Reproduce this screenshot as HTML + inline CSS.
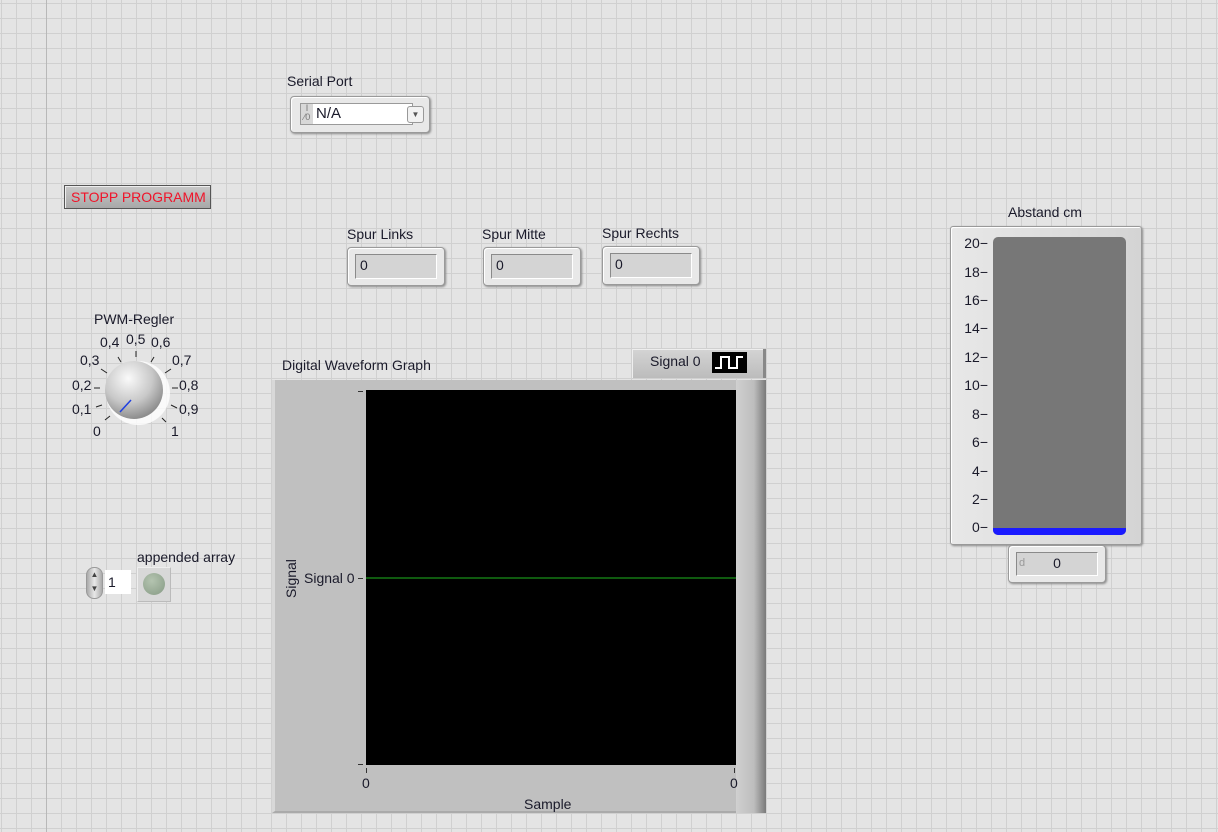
<!DOCTYPE html>
<html><head><meta charset="utf-8"><style>
*{margin:0;padding:0;box-sizing:border-box}
body{width:1218px;height:832px;overflow:hidden;position:relative;font-family:"Liberation Sans",sans-serif;font-size:14px;color:#1a1a2a;
background-color:#e4e4e4;
background-image:linear-gradient(to right,#d0d0d0 1px,transparent 1px),linear-gradient(to bottom,#d0d0d0 1px,transparent 1px);
background-size:15px 15px;background-position:1px 3px}
.a{position:absolute}
.lbl{position:absolute;font-size:14px;white-space:nowrap}
.ind{position:absolute;background:#e8e8e8;border:1px solid #9a9a9a;border-radius:4px;box-shadow:1px 1px 2px #888, inset 1px 1px 0 #fff}
.ind .f{position:absolute;left:7px;top:6px;right:7px;bottom:6px;background:#d4d4d4;border:1px solid #8a8a8a;border-right-color:#fff;border-bottom-color:#fff;padding-left:4px;line-height:21px;font-size:14px}
.sc{position:absolute;font-size:14px;text-align:right;width:42px}
</style></head><body>
<div class="a" style="left:46px;top:0;width:1px;height:832px;background:#b8b8b8"></div>

<div class="lbl" style="left:287px;top:73px">Serial Port</div>
<div class="ind" style="left:290px;top:96px;width:140px;height:37px">
 <div class="a" style="left:9px;top:6px;width:113px;height:22px;background:#fff;border:1px solid #9a9a9a"></div>
 <div class="a" style="left:10px;top:7px;width:12px;height:20px;background:#d8d8d8;font-size:9px;color:#777;line-height:9px;text-align:center">I<br>⁄0</div>
 <div class="a" style="left:25px;top:8px;font-size:15px">N/A</div>
 <div class="a" style="left:116px;top:9px;width:17px;height:17px;background:#f2f2f2;border:1px solid #999;border-radius:3px;font-size:8px;text-align:center;line-height:15px;color:#555">▼</div>
</div>

<div class="a" style="left:64px;top:185px;width:147px;height:24px;background:linear-gradient(#c8c8c8,#a8a8a8);border:1px solid #555;box-shadow:inset 1px 1px 0 #eee;color:#f0142a;font-size:14px;line-height:22px;padding-left:6px">STOPP PROGRAMM</div>

<div class="lbl" style="left:347px;top:226px">Spur Links</div>
<div class="ind" style="left:347px;top:247px;width:98px;height:39px"><div class="f">0</div></div>
<div class="lbl" style="left:482px;top:226px">Spur Mitte</div>
<div class="ind" style="left:483px;top:247px;width:98px;height:39px"><div class="f">0</div></div>
<div class="lbl" style="left:602px;top:225px">Spur Rechts</div>
<div class="ind" style="left:602px;top:246px;width:98px;height:39px"><div class="f">0</div></div>

<!-- Knob -->
<div class="lbl" style="left:94px;top:311px">PWM-Regler</div>
<svg class="a" style="left:60px;top:330px" width="150" height="115" viewBox="60 330 150 115">
 <g stroke="#222" stroke-width="1">
  <line x1="105" y1="420" x2="110" y2="416"/><line x1="96" y1="407" x2="102" y2="405"/><line x1="94" y1="388" x2="100" y2="388"/>
  <line x1="101" y1="369" x2="107" y2="373"/><line x1="118" y1="357" x2="121" y2="362"/><line x1="136" y1="351" x2="136" y2="357"/>
  <line x1="154" y1="357" x2="151" y2="362"/><line x1="171" y1="369" x2="165" y2="373"/><line x1="172" y1="388" x2="178" y2="388"/>
  <line x1="171" y1="405" x2="177" y2="408"/><line x1="162" y1="418" x2="166" y2="422"/>
 </g>
 <defs><radialGradient id="k" cx="40%" cy="30%" r="70%"><stop offset="0" stop-color="#fafafa"/><stop offset=".6" stop-color="#c8c8c8"/><stop offset="1" stop-color="#8e8e8e"/></radialGradient></defs>
 <circle cx="138" cy="393" r="32" fill="#fff" opacity=".8"/>
 <circle cx="134" cy="390" r="29" fill="url(#k)"/>
 <line x1="120" y1="412" x2="131" y2="400" stroke="#2040e0" stroke-width="1.5"/>
</svg>
<div class="lbl" style="left:93px;top:423px">0</div>
<div class="lbl" style="left:72px;top:401px">0,1</div>
<div class="lbl" style="left:72px;top:377px">0,2</div>
<div class="lbl" style="left:80px;top:352px">0,3</div>
<div class="lbl" style="left:100px;top:334px">0,4</div>
<div class="lbl" style="left:126px;top:331px">0,5</div>
<div class="lbl" style="left:151px;top:334px">0,6</div>
<div class="lbl" style="left:172px;top:352px">0,7</div>
<div class="lbl" style="left:179px;top:377px">0,8</div>
<div class="lbl" style="left:179px;top:401px">0,9</div>
<div class="lbl" style="left:171px;top:423px">1</div>

<!-- array -->
<div class="lbl" style="left:137px;top:549px">appended array</div>
<div class="a" style="left:86px;top:567px;width:17px;height:32px;border-radius:8px;background:linear-gradient(90deg,#aaa,#e8e8e8,#aaa);border:1px solid #999;font-size:8px;text-align:center;line-height:14px;color:#444">▲<br>▼</div>
<div class="a" style="left:105px;top:570px;width:26px;height:24px;background:#fff;font-size:14px;line-height:24px;padding-left:3px">1</div>
<div class="a" style="left:137px;top:567px;width:34px;height:35px;background:#d8d8d8;border:1px solid #eee;border-right-color:#bbb;border-bottom-color:#bbb"></div>
<div class="a" style="left:143px;top:573px;width:22px;height:22px;border-radius:50%;background:radial-gradient(circle at 40% 35%,#b4c4b0,#869a84)"></div>

<!-- graph -->
<div class="lbl" style="left:282px;top:357px">Digital Waveform Graph</div>
<div class="a" style="left:632px;top:349px;width:134px;height:29px;background:linear-gradient(#d4d4d4,#bcbcbc);border-right:3px solid #888;box-shadow:inset 1px 1px 0 #eee"></div>
<div class="lbl" style="left:650px;top:353px;font-size:14px">Signal 0</div>
<svg class="a" style="left:712px;top:352px" width="35" height="21"><rect width="35" height="21" fill="#000"/><path d="M3 16H9V5H17V16H25V5H31" stroke="#fff" stroke-width="2" fill="none"/></svg>
<div class="a" style="left:272px;top:380px;width:494px;height:433px;background:#c0c0c0;border-left:3px solid #d8d8d8;border-bottom:2px solid #aaa"></div>
<div class="a" style="left:736px;top:380px;width:30px;height:433px;background:linear-gradient(90deg,#d0d0d0,#bdbdbd 60%,#7a7a7a)"></div>
<div class="a" style="left:366px;top:390px;width:370px;height:375px;background:#000"></div>
<div class="a" style="left:366px;top:577px;width:370px;height:2px;background:#0f5a0f"></div>
<div class="a" style="left:358px;top:391px;width:5px;height:1px;background:#333"></div>
<div class="a" style="left:358px;top:764px;width:5px;height:1px;background:#333"></div>
<div class="a" style="left:358px;top:578px;width:5px;height:1px;background:#333"></div>
<div class="lbl" style="left:304px;top:570px">Signal 0</div>
<div class="lbl" style="left:283px;top:598px;transform:rotate(-90deg);transform-origin:0 0">Signal</div>
<div class="a" style="left:366px;top:768px;width:1px;height:5px;background:#333"></div>
<div class="a" style="left:734px;top:768px;width:1px;height:5px;background:#333"></div>
<div class="lbl" style="left:362px;top:775px">0</div>
<div class="lbl" style="left:730px;top:775px">0</div>
<div class="lbl" style="left:524px;top:796px">Sample</div>

<!-- tank -->
<div class="lbl" style="left:1008px;top:204px">Abstand cm</div>
<div class="a" style="left:950px;top:226px;width:192px;height:319px;background:linear-gradient(90deg,#e8e8e8,#d4d4d4);border:1px solid #999;border-radius:3px;box-shadow:1px 1px 2px #888,inset 1px 1px 0 #fff"></div>
<div class="a" style="left:993px;top:237px;width:133px;height:298px;background:#777;border-radius:5px;overflow:hidden"><div class="a" style="left:0;bottom:0;width:100%;height:7px;background:#1a1aff"></div></div>
<div class="sc" style="left:946px;top:235px">20−</div>
<div class="sc" style="left:946px;top:264px">18−</div>
<div class="sc" style="left:946px;top:292px">16−</div>
<div class="sc" style="left:946px;top:320px">14−</div>
<div class="sc" style="left:946px;top:349px">12−</div>
<div class="sc" style="left:946px;top:377px">10−</div>
<div class="sc" style="left:946px;top:406px">8−</div>
<div class="sc" style="left:946px;top:434px">6−</div>
<div class="sc" style="left:946px;top:463px">4−</div>
<div class="sc" style="left:946px;top:491px">2−</div>
<div class="sc" style="left:946px;top:519px">0−</div>
<div class="ind" style="left:1008px;top:545px;width:98px;height:38px"><div class="f" style="text-align:center;padding:0"><span style="position:absolute;left:2px;color:#999;font-size:11px">d</span>0</div></div>
</body></html>
